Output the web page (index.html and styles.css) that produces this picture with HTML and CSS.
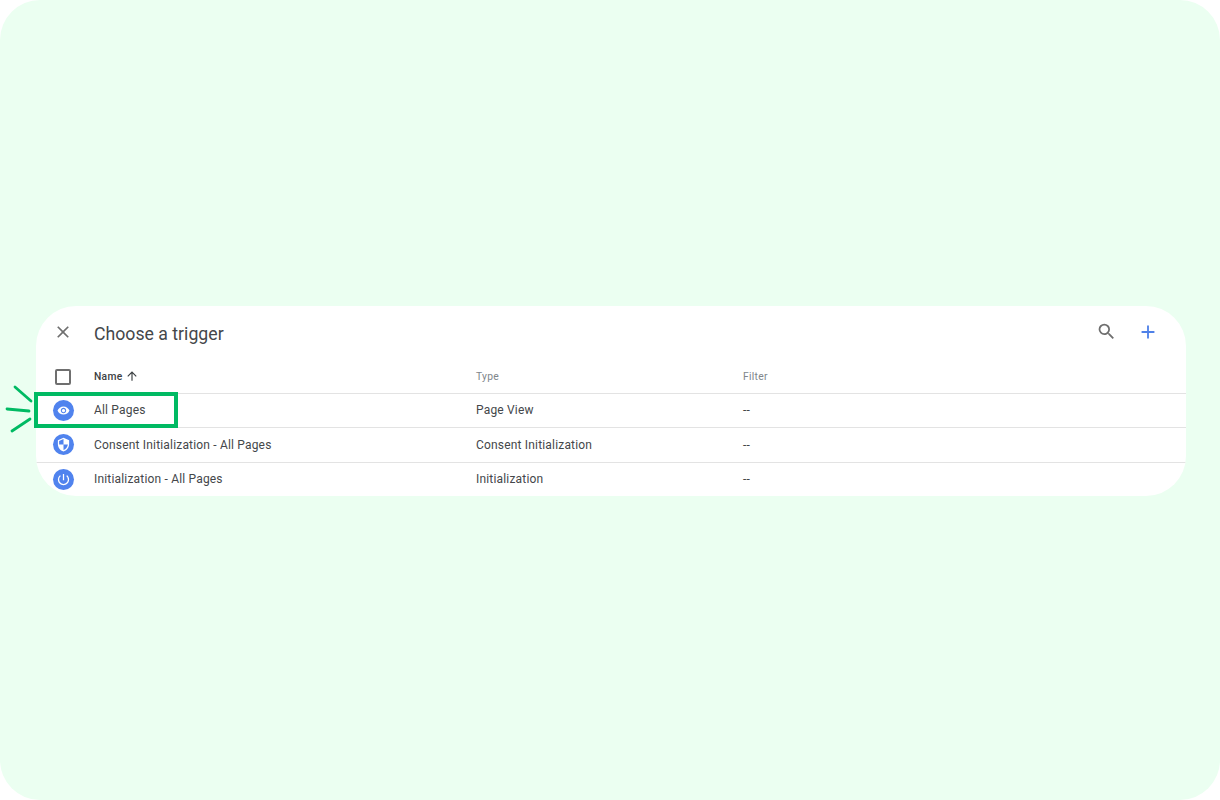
FILE: index.html
```html
<!DOCTYPE html>
<html lang="en">
<head>
<meta charset="utf-8">
<title>Choose a trigger</title>
<link rel="stylesheet" href="styles.css">
</head>
<body>
<main class="page">
  <section class="card">
    <header class="head">
      <svg class="close" width="20" height="20" viewBox="0 0 24 24"><path d="M19 6.41 17.59 5 12 10.59 6.41 5 5 6.41 10.59 12 5 17.59 6.41 19 12 13.41 17.59 19 19 17.59 13.41 12z"/></svg>
      <h1 class="title">Choose a trigger</h1>
      <svg class="search" width="21" height="21" viewBox="0 0 24 24"><path d="M15.5 14h-.79l-.28-.27A6.47 6.47 0 0 0 16 9.5 6.5 6.5 0 1 0 9.5 16c1.61 0 3.09-.59 4.23-1.57l.27.28v.79l5 4.99L20.49 19l-4.99-5zm-6 0C7.01 14 5 11.99 5 9.5S7.01 5 9.5 5 14 7.01 14 9.5 11.99 14 9.5 14z"/></svg>
      <svg class="plus" width="22" height="22" viewBox="0 0 24 24"><path d="M19 13h-6v6h-2v-6H5v-2h6V5h2v6h6v2z"/></svg>
    </header>
    <div class="row row-head">
      <div class="lead"><span class="check"></span></div>
      <div class="col-name name-head">Name
        <svg class="arrow" width="14" height="14" viewBox="0 0 24 24"><path d="M4 12l1.41 1.41L11 7.83V20h2V7.83l5.58 5.59L20 12l-8-8-8 8z"/></svg>
      </div>
      <div class="col-type">Type</div>
      <div class="col-filter">Filter</div>
    </div>
    <div class="row">
      <div class="lead"><span class="badge">
        <svg width="13" height="13" viewBox="0 0 24 24"><path d="M12 4.5C7 4.5 2.73 7.61 1 12c1.73 4.39 6 7.5 11 7.5s9.27-3.11 11-7.5c-1.73-4.39-6-7.5-11-7.5zM12 17c-2.76 0-5-2.24-5-5s2.24-5 5-5 5 2.24 5 5-2.24 5-5 5zm0-8c-1.66 0-3 1.34-3 3s1.34 3 3 3 3-1.34 3-3-1.34-3-3-3z"/></svg>
      </span></div>
      <div class="col-name">All Pages</div>
      <div class="col-type">Page View</div>
      <div class="col-filter">--</div>
    </div>
    <div class="row row-consent">
      <div class="lead"><span class="badge">
        <svg width="15" height="15" viewBox="0 0 24 24"><path d="M12 1 3 5v6c0 5.55 3.84 10.74 9 12 5.16-1.26 9-6.45 9-12V5l-9-4zm0 10.99h7c-.53 4.12-3.28 7.79-7 8.94V12H5V6.3l7-3.11v8.8z"/></svg>
      </span></div>
      <div class="col-name">Consent Initialization - All Pages</div>
      <div class="col-type">Consent Initialization</div>
      <div class="col-filter">--</div>
    </div>
    <div class="row">
      <div class="lead"><span class="badge">
        <svg width="15" height="15" viewBox="0 0 24 24"><path d="M13 3h-2v10h2V3zm4.83 2.17-1.42 1.42A6.92 6.92 0 0 1 19 12c0 3.87-3.13 7-7 7s-7-3.13-7-7c0-2.27 1.08-4.28 2.76-5.56L6.34 5.02A8.95 8.95 0 0 0 3 12c0 4.97 4.03 9 9 9s9-4.03 9-9c0-2.74-1.23-5.19-3.17-6.83z"/></svg>
      </span></div>
      <div class="col-name">Initialization - All Pages</div>
      <div class="col-type">Initialization</div>
      <div class="col-filter">--</div>
    </div>
  </section>
  <div class="highlight"></div>
  <svg class="rays" width="36" height="50" viewBox="0 0 36 50"><path d="M15 387l16 14M7 409l22 2M12 431l18-12" transform="translate(0 -384)"/></svg>
</main>
</body>
</html>
```
FILE: styles.css
```css
* { box-sizing: border-box; }
html, body { margin: 0; padding: 0; background: #fff; }
body { width: 1220px; height: 800px; overflow: hidden; font-family: Roboto, "Liberation Sans", sans-serif; }
.page {
  position: relative;
  width: 1220px;
  height: 800px;
  padding: 306px 34px 0 36px;
  background: #ebfff1;
  border-radius: 40px;
}
.card {
  width: 1150px;
  height: 190px;
  background: #fff;
  border-radius: 40px;
  overflow: hidden;
}
.head {
  display: flex;
  align-items: center;
  height: 54px;
  padding-left: 17px;
  padding-right: 27px;
}
.close { fill: #6f6f6f; flex: none; margin-top: -2px; }
.title {
  flex: 1;
  margin: 2px 0 0 21px;
  font-size: 17.7px;
  font-weight: 400;
  color: #44474a;
  line-height: 52px;
}
.search { fill: #6f6f6f; flex: none; margin-top: -3px; }
.plus { fill: #4f81e8; flex: none; margin-left: 20px; margin-top: -3px; }
.row {
  display: flex;
  align-items: center;
  height: 34.33px;
  font-size: 12px;
  letter-spacing: .18px;
  color: #44474a;
  border-bottom: 1px solid #e3e3e3;
}
.row:last-child { border-bottom: 0; }
.row > [class^="col-"] { margin-bottom: 1px; }
.row-head > [class^="col-"], .row-consent > [class^="col-"] { margin-bottom: 0; }
.row-head { height: 34px; font-size: 10.3px; color: #80868b; font-weight: 400; letter-spacing: .3px; }
.lead { flex: none; width: 58px; padding-left: 17px; display: flex; }
.row-head .lead { padding-left: 16px; }
.check { width: 16px; height: 16px; margin-left: 3px; border: 2px solid #6f6f6f; border-radius: 2px; }
.badge {
  width: 21px; height: 21px; border-radius: 50%;
  background: #5083ee;
  display: flex; align-items: center; justify-content: center;
}
.badge svg { fill: #fff; }
.col-name { flex: none; width: 382px; }
.col-type { flex: none; width: 267px; }
.col-filter { flex: 1; }
.name-head { display: flex; align-items: center; gap: 2px; color: #3c4043; font-weight: 500; }
.arrow { fill: #3c4043; margin-top: -2px; }
.highlight {
  position: absolute;
  left: 34px; top: 392px;
  width: 144px; height: 36px;
  border: 4px solid #00ba63;
}
.rays {
  position: absolute;
  left: 0; top: 384px;
  fill: none;
  stroke: #00ba63;
  stroke-width: 2.8px;
  stroke-linecap: round;
}
```
